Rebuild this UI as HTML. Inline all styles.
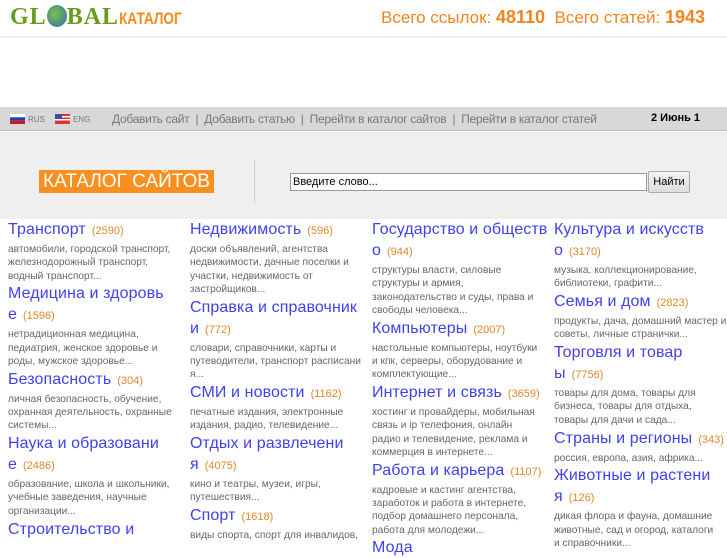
<!DOCTYPE html>
<html><head><meta charset="utf-8"><style>
*{margin:0;padding:0;box-sizing:border-box}
body{width:727px;height:545px;overflow:hidden;background:#fff;font-family:"Liberation Sans",sans-serif}
.top{height:38px;border-bottom:2px solid #eee;position:relative}
.logo{position:absolute;left:10px;top:4px;font-family:"Liberation Serif",serif;font-weight:bold;font-size:24px;color:#6a9a1c;letter-spacing:1px}
.logo .o{display:inline-block;width:20px;height:22px;border-radius:50%;background:radial-gradient(circle at 40% 40%,#7bc04a,#2c6fb0);vertical-align:-3px}
.logo .k{font-family:"Liberation Sans",sans-serif;font-size:17px;color:#f08a1c;letter-spacing:0;transform:scaleX(.8);display:inline-block;transform-origin:left}
.stats{position:absolute;right:22px;top:7px;font-size:17px;color:#f3841d}
.stats b{font-size:18px}
.nav{position:absolute;top:107px;left:0;width:727px;height:24px;background:#d8d8d8;border-bottom:1px solid #bdbdbd;font-size:12px;color:#777}
.nav span{position:absolute;top:5px}
.flag{position:absolute;top:7px;width:15px;height:10px}
.panel{position:absolute;top:132px;left:0;width:727px;height:87px;background:#efefef}
.kat{position:absolute;left:39px;top:38px;background:#f7901e;color:#fff;font-size:19px;padding:0 4px;line-height:23px}
.sep{position:absolute;left:254px;top:28px;width:1px;height:43px;background:#ccc}
.inp{position:absolute;left:290px;top:41px;width:357px;height:18px;border:1px solid #999;background:#fff;font-size:11px;padding:2px 2px;color:#000}
.btn{position:absolute;left:648px;top:39px;width:42px;height:22px;border:1px solid #aaa;border-radius:2px;background:linear-gradient(#f4f4f4,#ddd);font-size:11px;text-align:center;line-height:20px}
.col{position:absolute;top:219px;width:172px}
.t{font-size:16px;line-height:21px;color:#4040ee;white-space:nowrap;letter-spacing:.1px}
.t i{font-style:normal;font-size:11px;color:#e0882a;margin-left:6px;letter-spacing:0}
.d{font-size:10.2px;line-height:13.3px;color:#666;margin:1px 0 .5px;white-space:nowrap;letter-spacing:0}
</style></head><body>
<div class="top">
<div class="logo">GL<span class="o"></span>BAL<span class="k">КАТАЛОГ</span></div>
<div class="stats">Всего ссылок: <b>48110</b>&nbsp; Всего статей: <b>1943</b></div>
</div>
<div class="nav">
<svg class="flag" style="left:10px" viewBox="0 0 15 10"><rect width="15" height="10" fill="#fff"/><rect y="3.3" width="15" height="3.4" fill="#1c3fc8"/><rect y="6.7" width="15" height="3.3" fill="#e01010"/></svg>
<span style="left:28px;font-size:8px;top:8px">RUS</span>
<svg class="flag" style="left:55px" viewBox="0 0 15 10"><rect width="15" height="10" fill="#d33"/><rect y="2" width="15" height="1.5" fill="#fff"/><rect y="5" width="15" height="1.5" fill="#fff"/><rect width="7" height="5" fill="#3a4fa0"/></svg>
<span style="left:73px;font-size:8px;top:8px">ENG</span>
<span style="left:112px;letter-spacing:-.3px">Добавить сайт &nbsp;|&nbsp; Добавить статью &nbsp;|&nbsp; Перейти в каталог сайтов &nbsp;|&nbsp; Перейти в каталог статей</span>
<span style="left:651px;color:#000;font-weight:bold;font-size:11px">2 Июнь 1</span>
</div>
<div class="panel">
<div class="kat">КАТАЛОГ САЙТОВ</div>
<div class="sep"></div>
<div class="inp">Введите слово...</div>
<div class="btn">Найти</div>
</div>

<div class="col" style="left:8px">
<div class="t">Транспорт<i>(2590)</i></div>
<div class="d">автомобили, городской транспорт,<br>железнодорожный транспорт,<br>водный транспорт...</div>
<div class="t">Медицина и здоровь<br>е<i>(1596)</i></div>
<div class="d">нетрадиционная медицина,<br>педиатрия, женское здоровье и<br>роды, мужское здоровье...</div>
<div class="t">Безопасность<i>(304)</i></div>
<div class="d">личная безопасность, обучение,<br>охранная деятельность, охранные<br>системы...</div>
<div class="t">Наука и образовани<br>е<i>(2486)</i></div>
<div class="d">образование, школа и школьники,<br>учебные заведения, научные<br>организации...</div>
<div class="t">Строительство и</div>
</div>

<div class="col" style="left:190px">
<div class="t">Недвижимость<i>(596)</i></div>
<div class="d">доски объявлений, агентства<br>недвижимости, дачные поселки и<br>участки, недвижимость от<br>застройщиков...</div>
<div class="t">Справка и справочник<br>и<i>(772)</i></div>
<div class="d">словари, справочники, карты и<br>путеводители, транспорт расписани<br>я...</div>
<div class="t">СМИ и новости<i>(1162)</i></div>
<div class="d">печатные издания, электронные<br>издания, радио, телевидение...</div>
<div class="t">Отдых и развлечени<br>я<i>(4075)</i></div>
<div class="d">кино и театры, музеи, игры,<br>путешествия...</div>
<div class="t">Спорт<i>(1618)</i></div>
<div class="d">виды спорта, спорт для инвалидов,</div>
</div>

<div class="col" style="left:372px">
<div class="t">Государство и обществ<br>о<i>(944)</i></div>
<div class="d">структуры власти, силовые<br>структуры и армия,<br>законодательство и суды, права и<br>свободы человека...</div>
<div class="t">Компьютеры<i>(2007)</i></div>
<div class="d">настольные компьютеры, ноутбуки<br>и кпк, серверы, оборудование и<br>комплектующие...</div>
<div class="t">Интернет и связь<i>(3659)</i></div>
<div class="d">хостинг и провайдеры, мобильная<br>связь и ip телефония, онлайн<br>радио и телевидение, реклама и<br>коммерция в интернете...</div>
<div class="t">Работа и карьера<i>(1107)</i></div>
<div class="d">кадровые и кастинг агентства,<br>заработок и работа в интернете,<br>подбор домашнего персонала,<br>работа для молодежи...</div>
<div class="t">Мода</div>
</div>

<div class="col" style="left:554px">
<div class="t">Культура и искусств<br>о<i>(3170)</i></div>
<div class="d">музыка, коллекционирование,<br>библиотеки, графити...</div>
<div class="t">Семья и дом<i>(2823)</i></div>
<div class="d">продукты, дача, домашний мастер и<br>советы, личные странички...</div>
<div class="t">Торговля и товар<br>ы<i>(7756)</i></div>
<div class="d">товары для дома, товары для<br>бизнеса, товары для отдыха,<br>товары для дачи и сада...</div>
<div class="t">Страны и регионы<i>(343)</i></div>
<div class="d">россия, европа, азия, африка...</div>
<div class="t">Животные и растени<br>я<i>(126)</i></div>
<div class="d">дикая флора и фауна, домашние<br>животные, сад и огород, каталоги<br>и справочники...</div>
</div>
</body></html>
